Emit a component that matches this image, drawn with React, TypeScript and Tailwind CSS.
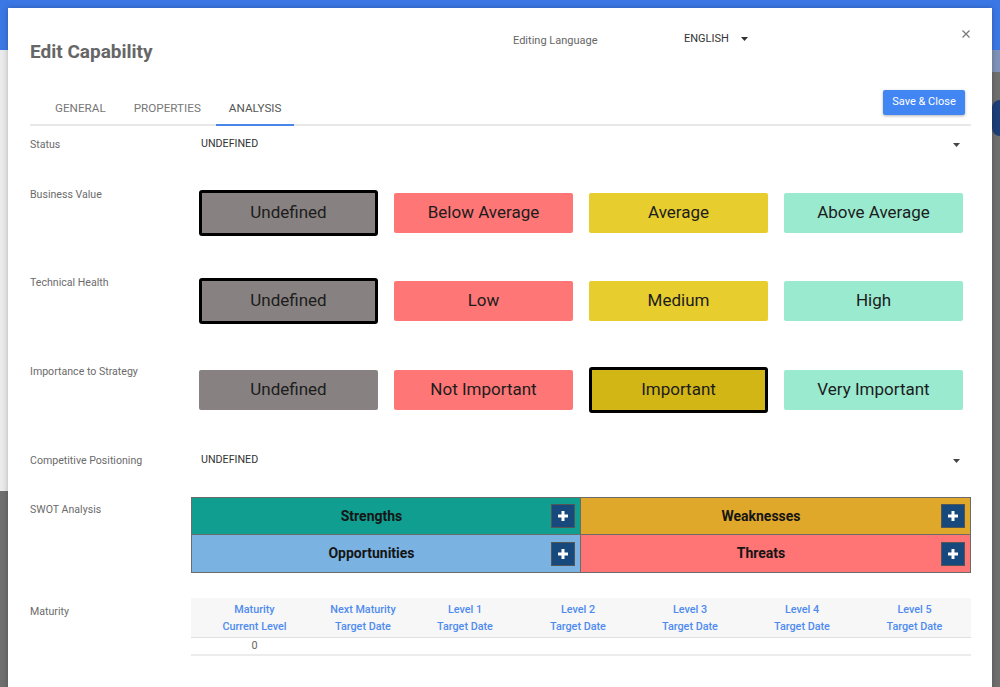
import React from "react";

const font = { fontFamily: "Roboto, 'Liberation Sans', Arial, sans-serif" };

function Caret({ className }: { className?: string }) {
  return (
    <svg width="7" height="4" viewBox="0 0 7 4" className={className}>
      <path d="M0 0 L7 0 L3.5 4 Z" fill="currentColor" />
    </svg>
  );
}

function Label({ children, className }: { children: React.ReactNode; className?: string }) {
  return (
    <div className={"w-[161px] shrink-0 text-[10.6px] leading-[12px] text-[#6b6b6b] " + (className || "")}>
      {children}
    </div>
  );
}

type Opt = { label: string; bg: string; selected?: boolean };

function ChoiceRow({ label, options, className }: { label: string; options: Opt[]; className?: string }) {
  return (
    <div className={"flex items-start " + (className || "")}>
      <Label>{label}</Label>
      <div className="grid h-[46px] flex-1 grid-cols-4 items-center mt-[1px]">
        {options.map((o) => (
          <div key={o.label} className="px-[8px]">
            <div
              className={
                "flex items-center justify-center text-[17px] text-[#1c1c1c] " +
                o.bg +
                (o.selected ? " h-[46px] rounded-[3px] border-[3px] border-black" : " h-[40px] rounded-[2px]")
              }
            >
              {o.label}
            </div>
          </div>
        ))}
      </div>
    </div>
  );
}

function PlusBtn() {
  return (
    <div className="mr-[5px] flex h-[24px] w-[24px] items-center justify-center border border-[#555] bg-[#17497c]">
      <svg width="12" height="12" viewBox="0 0 12 12">
        <path d="M6 1 V11 M1 6 H11" stroke="white" strokeWidth="3" />
      </svg>
    </div>
  );
}

function SwotCell({ title, bg, className }: { title: string; bg: string; className?: string }) {
  return (
    <div className={"flex h-[37px] items-center " + bg + " " + (className || "")}>
      <div className="flex-1 text-center text-[14px] font-bold text-[#151515]">{title}</div>
      <PlusBtn />
    </div>
  );
}

const cols: [string, string][] = [
  ["Maturity", "Current Level"],
  ["Next Maturity", "Target Date"],
  ["Level 1", "Target Date"],
  ["Level 2", "Target Date"],
  ["Level 3", "Target Date"],
  ["Level 4", "Target Date"],
  ["Level 5", "Target Date"],
];

export default function App() {
  return (
    <div className="relative h-[687px] w-[1000px] overflow-hidden bg-[#ececec]" style={font}>
      {/* background page */}
      <div className="flex h-full flex-col">
        <div className="h-[50px] bg-[#3b78e6]" />
        <div className="flex flex-1">
          <div className="flex w-[8px] flex-col">
            <div className="h-[441px] bg-[#ebebeb]" />
            <div className="flex-1 bg-[#6f6f6f]" />
          </div>
          <div className="flex-1 bg-[#ececec]" />
          <div className="flex w-[8px] flex-col bg-[#6f6f6f]">
            <div className="h-[22px] bg-[#7f93b8]" />
            <div className="mt-[28px] h-[36px] w-[16px] rounded-full bg-[#1d3e78]" />
          </div>
        </div>
      </div>

      {/* modal */}
      <div className="absolute left-[8px] top-[8px] h-[700px] w-[984px] bg-white pl-[22px] pr-[21px] pt-[21px] shadow-[0_0_6px_rgba(0,0,0,0.25)]">
        {/* header */}
        <div className="flex h-[60px] items-start">
          <div className="mt-[11px] w-[483px] text-[19px] font-bold leading-[24px] text-[#666]">Edit Capability</div>
          <div className="mt-[5px] w-[171px] text-[11px] leading-[14px] text-[#666]">Editing Language</div>
          <div className="mt-[3px] flex items-center text-[11px] leading-[14px] text-[#333]">
            <span>ENGLISH</span>
            <Caret className="ml-[12px] text-[#333]" />
          </div>
          <div className="flex-1" />
          <div className="mr-[1px] mt-[1px]">
            <svg width="8" height="8" viewBox="0 0 8 8">
              <path d="M0.5 0.5 L7.5 7.5 M7.5 0.5 L0.5 7.5" stroke="#7a7a7a" strokeWidth="1.3" />
            </svg>
          </div>
        </div>

        {/* tabs */}
        <div className="flex items-start border-b-[2px] border-[#e8e8e8]">
          <div className="ml-[12px] flex gap-[2px]">
            {["GENERAL", "PROPERTIES", "ANALYSIS"].map((t) => (
              <div
                key={t}
                className={
                  "-mb-[2px] flex h-[37px] items-center px-[13px] pt-[4px] text-[11.7px] " +
                  (t === "ANALYSIS" ? "border-b-[2px] border-[#4a86e8] text-[#555]" : "border-b-[2px] border-transparent text-[#777]")
                }
              >
                {t}
              </div>
            ))}
          </div>
          <div className="flex-1" />
          <div className="mr-[6px] mt-[1px] flex h-[25px] w-[82px] items-center justify-center rounded-[2px] bg-[#4286f4] text-[11px] text-white shadow-[0_1px_3px_rgba(0,0,0,0.3)]">
            Save &amp; Close
          </div>
        </div>

        {/* status */}
        <div className="mt-[9px] flex h-[20px] items-center">
          <Label>Status</Label>
          <div className="flex flex-1 items-center pl-[10px] pr-[11px]">
            <span className="-mt-[2px] text-[10.7px] text-[#333]">UNDEFINED</span>
            <div className="flex-1" />
            <Caret className="text-[#444]" />
          </div>
        </div>

        <ChoiceRow
          className="mt-[34px]"
          label="Business Value"
          options={[
            { label: "Undefined", bg: "bg-[#878281]", selected: true },
            { label: "Below Average", bg: "bg-[#ff7676]" },
            { label: "Average", bg: "bg-[#e7ce2e]" },
            { label: "Above Average", bg: "bg-[#9aead0]" },
          ]}
        />
        <ChoiceRow
          className="mt-[41px]"
          label="Technical Health"
          options={[
            { label: "Undefined", bg: "bg-[#878281]", selected: true },
            { label: "Low", bg: "bg-[#ff7676]" },
            { label: "Medium", bg: "bg-[#e7ce2e]" },
            { label: "High", bg: "bg-[#9aead0]" },
          ]}
        />
        <ChoiceRow
          className="mt-[42px]"
          label="Importance to Strategy"
          options={[
            { label: "Undefined", bg: "bg-[#878281]" },
            { label: "Not Important", bg: "bg-[#ff7676]" },
            { label: "Important", bg: "bg-[#d2b616]", selected: true },
            { label: "Very Important", bg: "bg-[#9aead0]" },
          ]}
        />

        {/* competitive positioning */}
        <div className="mt-[38px] flex h-[20px] items-center">
          <Label>Competitive Positioning</Label>
          <div className="flex flex-1 items-center pl-[10px] pr-[11px]">
            <span className="-mt-[2px] text-[10.7px] text-[#333]">UNDEFINED</span>
            <div className="flex-1" />
            <Caret className="text-[#444]" />
          </div>
        </div>

        {/* SWOT */}
        <div className="mt-[26px] flex items-start">
          <Label className="mt-[7px]">SWOT Analysis</Label>
          <div className="grid flex-1 grid-cols-2 border border-[#6b6b6b]">
            <SwotCell title="Strengths" bg="bg-[#0f9e90]" className="border-b border-r border-[#6b6b6b]" />
            <SwotCell title="Weaknesses" bg="bg-[#e0a82a]" className="border-b border-[#6b6b6b]" />
            <SwotCell title="Opportunities" bg="bg-[#7ab3e2]" className="border-r border-[#6b6b6b]" />
            <SwotCell title="Threats" bg="bg-[#ff7474]" />
          </div>
        </div>

        {/* Maturity */}
        <div className="mt-[25px] flex items-start">
          <Label className="mt-[8px]">Maturity</Label>
          <div className="flex-1">
            <div className="grid h-[40px] grid-cols-[127px_90px_114px_112px_112px_112px_113px] items-center border-b border-[#e0e0e0] bg-[#f7f7f7]">
              {cols.map(([a, b]) => (
                <div key={a} className="text-center text-[10.8px] font-medium leading-[17px] text-[#4f8bef]">
                  <div>{a}</div>
                  <div>{b}</div>
                </div>
              ))}
            </div>
            <div className="grid h-[18px] grid-cols-[127px_90px_114px_112px_112px_112px_113px] items-center border-b-[2px] border-[#ececec]">
              <div className="text-center text-[10.8px] text-[#666]">0</div>
            </div>
          </div>
        </div>
      </div>
    </div>
  );
}
